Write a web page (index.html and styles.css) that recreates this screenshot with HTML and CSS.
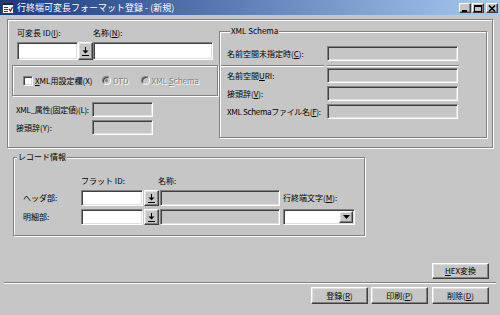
FILE: index.html
```html
<!DOCTYPE html>
<html lang="ja">
<head>
    <meta charset="UTF-8">
    <title>行終端可変長フォーマット登録</title>
    <link rel="stylesheet" href="styles.css">
</head>
<body>
    <div class="window">
        <div class="titlebar">
            <svg class="app-icon" width="12" height="12" viewBox="0 0 12 12">
                <rect x="0.5" y="0.5" width="11" height="11" fill="#fff" stroke="#404040"/>
                <rect x="1" y="1" width="10" height="2" fill="#0a246a"/>
                <rect x="2" y="5" width="4" height="1" fill="#404040"/>
                <rect x="2" y="7" width="4" height="1" fill="#404040"/>
                <rect x="2" y="9" width="4" height="1" fill="#404040"/>
                <path d="M7 7 L8.5 9 L10.5 5" fill="none" stroke="#c00000" stroke-width="1.3"/>
            </svg>
            <span class="title">行終端可変長フォーマット登録 - (新規)</span>
            <div class="win-buttons">
                <span class="win-btn">
                    <svg width="8" height="7" viewBox="0 0 8 7"><rect x="1" y="5" width="5" height="2" fill="#000"/></svg>
                </span>
                <span class="win-btn">
                    <svg width="8" height="7" viewBox="0 0 8 7"><rect x="0.5" y="0.5" width="7" height="6" fill="none" stroke="#000"/><rect x="0" y="0" width="8" height="2" fill="#000"/></svg>
                </span>
                <span class="win-btn close">
                    <svg width="8" height="7" viewBox="0 0 8 7"><path d="M1 0.5 L7 6.5 M7 0.5 L1 6.5" stroke="#000" stroke-width="1.5"/></svg>
                </span>
            </div>
        </div>

        <div class="top-panel etched">
            <div class="left-col">
                <div class="label-row">
                    <span class="lbl-id">可変長 ID(<u>I</u>):</span>
                    <span>名称(<u>N</u>):</span>
                </div>
                <div class="input-row">
                    <span class="box white w61"></span>
                    <span class="btn pick">
                        <svg width="7" height="9" viewBox="0 0 7 9"><rect x="3" y="0" width="1" height="5" fill="#000"/><path d="M0.5 3.5 H6.5 L3.5 6.5 Z" fill="#000"/><rect x="0" y="8" width="7" height="1" fill="#000"/></svg>
                    </span>
                    <span class="box white w120"></span>
                </div>
                <div class="xml-opt etched">
                    <span class="check"></span>
                    <span class="opt-text"><u>X</u>ML用設定欄(X)</span>
                    <span class="radio on"></span>
                    <span class="disabled">DTD</span>
                    <span class="radio"></span>
                    <span class="disabled">XML <u>S</u>chema</span>
                </div>
                <div class="attr-row first">
                    <span class="attr-label tight">XML_属性(固定値)(L):</span>
                    <span class="box small"></span>
                </div>
                <div class="attr-row">
                    <span class="attr-label">接頭辞(Y):</span>
                    <span class="box small"></span>
                </div>
            </div>

            <div class="xml-group etched">
                <div class="legend">XML Schema</div>
                <div class="xrow first">
                    <span class="xlabel">名前空間未指定時(<u>C</u>):</span>
                    <span class="box xinput"></span>
                </div>
                <div class="xsep">
                    <span class="line seg1"></span>
                    <span class="line seg2"></span>
                </div>
                <div class="xrow r2">
                    <span class="xlabel">名前空間<u>U</u>RI:</span>
                    <span class="box xinput"></span>
                </div>
                <div class="xrow">
                    <span class="xlabel">接頭辞(<u>V</u>):</span>
                    <span class="box xinput"></span>
                </div>
                <div class="xrow">
                    <span class="xlabel tight">XML Schemaファイル名(<u>F</u>):</span>
                    <span class="box xinput"></span>
                </div>
            </div>
        </div>

        <div class="record-group etched">
            <div class="legend">レコード情報</div>
            <div class="rec-head">
                <span class="rec-label"></span>
                <span class="head-flat">フラット ID:</span>
                <span>名称:</span>
            </div>
            <div class="rec-row first">
                <span class="rec-label">ヘッダ部:</span>
                <span class="box white rec-input"></span>
                <span class="btn pick">
                    <svg width="7" height="9" viewBox="0 0 7 9"><rect x="3" y="0" width="1" height="5" fill="#000"/><path d="M0.5 3.5 H6.5 L3.5 6.5 Z" fill="#000"/><rect x="0" y="8" width="7" height="1" fill="#000"/></svg>
                </span>
                <span class="box rec-name"></span>
                <span class="eol-label">行終端文字(<u>M</u>):</span>
            </div>
            <div class="rec-row">
                <span class="rec-label">明細部:</span>
                <span class="box white rec-input"></span>
                <span class="btn pick">
                    <svg width="7" height="9" viewBox="0 0 7 9"><rect x="3" y="0" width="1" height="5" fill="#000"/><path d="M0.5 3.5 H6.5 L3.5 6.5 Z" fill="#000"/><rect x="0" y="8" width="7" height="1" fill="#000"/></svg>
                </span>
                <span class="box rec-name"></span>
                <span class="box white select">
                    <span class="btn drop">
                        <svg width="7" height="4" viewBox="0 0 7 4"><path d="M0 0 H7 L3.5 4 Z" fill="#000"/></svg>
                    </span>
                </span>
            </div>
        </div>

        <div class="hex-row">
            <span class="btn cmd"><u>H</u>EX変換</span>
        </div>
        <div class="bottom-sep"></div>
        <div class="cmd-row">
            <span class="btn cmd">登録(<u>R</u>)</span>
            <span class="btn cmd">印刷(<u>P</u>)</span>
            <span class="btn cmd">削除(<u>D</u>)</span>
        </div>
    </div>
</body>
</html>
```

FILE: styles.css
```css
* {
    box-sizing: border-box;
}
body {
    margin: 0;
    background-color: #c6c6c6;
    font-family: "Noto Sans CJK JP", "Noto Sans", sans-serif;
    font-size: 8px;
    line-height: 10px;
    color: #000;
    white-space: nowrap;
}
u {
    text-decoration-thickness: 1px;
    text-underline-offset: 1px;
}
.tight {
    letter-spacing: -0.3px;
}
.window {
    width: 500px;
    height: 315px;
    background-color: #c6c6c6;
    overflow: hidden;
}

/* title bar */
.titlebar {
    height: 15px;
    display: flex;
    align-items: center;
    padding: 0 2px;
    background: linear-gradient(to right, #1a3a80, #a6caf0);
    color: #fff;
}
.app-icon {
    margin-right: 3px;
}
.title {
    font-size: 9px;
    flex: 1;
}
.win-buttons {
    display: flex;
    gap: 1px;
    margin-top: 1px;
}
.win-btn {
    width: 12px;
    height: 10px;
    display: flex;
    align-items: center;
    justify-content: center;
    background-color: #c6c6c6;
    border: 1px solid;
    border-color: #fff #404040 #404040 #fff;
    box-shadow: inset -1px -1px #808080;
}
.win-btn.close {
    margin-left: 1px;
}

/* shared widgets */
.etched {
    border: 1px solid #808080;
    box-shadow: 1px 1px 0 #fff, inset 1px 1px 0 #fff;
}
.legend {
    display: table;
    margin: -6px 0 0 3px;
    padding: 0 1px;
    background-color: #c6c6c6;
    height: 10px;
}
.box {
    display: block;
    border: 1px solid;
    border-color: #808080 #fff #fff #808080;
    box-shadow: inset 1px 1px #404040, inset -1px -1px #dfdfdf;
    background-color: #c6c6c6;
}
.white {
    background-color: #fff;
}
.btn {
    display: flex;
    align-items: center;
    justify-content: center;
    background-color: #c6c6c6;
    border: 1px solid;
    border-color: #fff #404040 #404040 #fff;
    box-shadow: inset -1px -1px #808080, inset 1px 1px #dfdfdf;
}
.disabled {
    color: #808080;
    text-shadow: 1px 1px 0 #fff;
}

/* top panel */
.top-panel {
    margin: 4px 0 0 7px;
    width: 486px;
    height: 129px;
    display: flex;
    gap: 1px;
    padding-left: 4px;
}
.left-col {
    width: 206px;
}
.label-row {
    display: flex;
    margin-top: 8px;
    padding-left: 5px;
    height: 10px;
}
.lbl-id {
    width: 76px;
}
.input-row {
    display: flex;
    margin-top: 4px;
    padding-left: 5px;
    height: 18px;
}
.w61 {
    width: 61px;
}
.w120 {
    width: 120px;
}
.pick {
    width: 15px;
}
.xml-opt {
    margin-top: 5px;
    height: 31px;
    display: flex;
    align-items: center;
    padding-left: 10px;
}
.check {
    width: 10px;
    height: 10px;
    background-color: #fff;
    border: 1px solid;
    border-color: #808080 #fff #fff #808080;
    box-shadow: inset 1px 1px #404040, inset -1px -1px #dfdfdf;
    margin-right: 2px;
}
.opt-text {
    width: 67px;
}
.radio {
    width: 9px;
    height: 9px;
    border-radius: 50%;
    background-color: #c6c6c6;
    border: 1px solid;
    border-color: #808080 #fff #fff #808080;
    box-shadow: inset 1px 1px #404040;
    margin-right: 2px;
    display: flex;
    align-items: center;
    justify-content: center;
}
.radio.on::after {
    content: "";
    width: 3px;
    height: 3px;
    border-radius: 50%;
    background-color: #808080;
}
.radio + .disabled {
    margin-right: 12px;
}
.attr-row {
    display: flex;
    align-items: center;
    height: 15px;
    margin-top: 3px;
    padding-left: 4px;
}
.attr-row.first {
    margin-top: 6px;
}
.attr-label {
    width: 76px;
    overflow: hidden;
}
.small {
    width: 61px;
    height: 15px;
}

/* XML Schema group */
.xml-group {
    margin-top: 11px;
    width: 268px;
    height: 107px;
    padding-left: 7px;
}
.xrow {
    display: flex;
    align-items: center;
    height: 15px;
    margin-top: 3px;
}
.xrow.first {
    margin-top: 10px;
}
.xrow.r2 {
    margin-top: 1px;
}
.xlabel {
    width: 100px;
    overflow: hidden;
}
.xinput {
    width: 131px;
    height: 15px;
}
.xsep {
    display: flex;
    gap: 3px;
    margin: 4px 0 0 -6px;
}
.line {
    height: 2px;
    border-top: 1px solid #808080;
    border-bottom: 1px solid #fff;
}
.seg1 {
    width: 103px;
}
.seg2 {
    width: 132px;
}

/* record group */
.record-group {
    margin: 9px 0 0 13px;
    width: 352px;
    height: 79px;
    padding-left: 9px;
}
.record-group .legend {
    margin-left: -6px;
}
.rec-head {
    display: flex;
    height: 10px;
    margin-top: 14px;
}
.rec-label {
    width: 58px;
}
.head-flat {
    width: 77px;
}
.rec-row {
    display: flex;
    align-items: center;
    height: 16px;
    margin-top: 3px;
}
.rec-row.first {
    margin-top: 4px;
}
.rec-input {
    width: 62px;
    height: 16px;
}
.rec-row .pick {
    height: 16px;
    margin-left: 1px;
}
.rec-name {
    width: 120px;
    height: 16px;
    margin-left: 1px;
}
.eol-label {
    margin-left: 3px;
}
.select {
    width: 72px;
    height: 16px;
    margin-left: 3px;
    display: flex;
    justify-content: flex-end;
    padding: 1px;
}
.drop {
    width: 14px;
    height: 12px;
}

/* bottom buttons */
.hex-row {
    display: flex;
    justify-content: flex-end;
    margin: 27px 11px 0 0;
}
.cmd {
    width: 57px;
    height: 16px;
}
.bottom-sep {
    margin: 3px 4px 0 4px;
    height: 2px;
    border-top: 1px solid #808080;
    border-bottom: 1px solid #fff;
}
.cmd-row {
    display: flex;
    justify-content: flex-end;
    gap: 3px;
    margin: 3px 11px 0 0;
}
.cmd-row .cmd {
    height: 17px;
}
.cmd-row .cmd:last-child {
    margin-left: 1px;
}
```
